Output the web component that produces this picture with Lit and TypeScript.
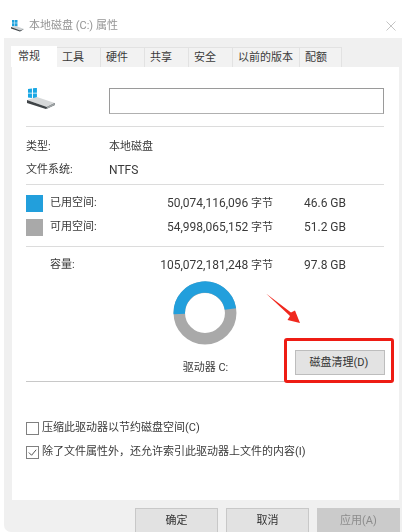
import { LitElement, html, css } from "lit";
import { customElement } from "lit/decorators.js";

@customElement("app-root")
export class AppRoot extends LitElement {
  static styles = css`
    :host {
      display: block; width: 402px; height: 532px; overflow: hidden; position: relative;
      background: #fff; color: #3a3a3a;
      font: 11px/16px Roboto, "Noto Sans CJK SC", sans-serif;
    }
    .soft { filter: blur(0.45px); height: 532px; position: relative; }
    .n { font-size: 12px; }
    .title { height: 38px; display: flex; align-items: center; padding: 14px 6px 0 11px; box-sizing: border-box; color: #959595; }
    .title svg.ic { margin-right: 5px; }
    .title .x { margin-left: auto; }
    .panel { margin-left: 4px; height: 494px; background: #f0f0f0; border-bottom-left-radius: 7px; padding: 8px 4px 0 7px; box-sizing: border-box; }
    .tabs { display: flex; height: 21px; align-items: flex-end; }
    .tab { height: 20px; box-sizing: border-box; border: 1px solid #e2e2e2; border-bottom: 0; border-left: 0; display: flex; align-items: center; padding-left: 5px; background: #f2f2f2; }
    .tab.on { height: 21px; background: #fff; border: 0; width: 46px; padding-left: 7px; }
    .content { width: 387px; height: 433px; background: #fff; padding: 0 15px 0 14px; box-sizing: border-box; margin-left: 1px; overflow: hidden; }
    .head { display: flex; padding-top: 21px; height: 59px; box-sizing: border-box; }
    .head svg { width: 30px; }
    .input { margin-left: 53px; width: 277px; height: 26px; box-sizing: border-box; border: 1px solid #9a9a9a; border-bottom-color: #b0b0b0; }
    .sep { height: 1px; background: #dcdcdc; }
    .kv { display: grid; grid-template-columns: 83px 1fr; grid-auto-rows: 23px; padding-top: 8px; height: 57px; box-sizing: border-box; align-items: center; }
    .stats { display: grid; grid-template-columns: 24px 60px 163px 31px auto; align-items: center; grid-auto-rows: 24px; }
    .stats.top { padding-top: 6px; }
    .stats.cap { padding-top: 6px; }
    .sep.gap { margin-top: 7px; }
    .sep.dark { background: #c8c8c8; }
    .sw { width: 17px; height: 17px; }
    .used { background: #229fdc; }
    .free { background: #a9a9a9; }
    .r { text-align: right; white-space: nowrap; }
    .driveArea { height: 104px; position: relative; display: flex; flex-direction: column; align-items: center; width: 358px; }
    .donut { margin: 4px 0 0 0; width: 64px; height: 64px; display: block; }
    .dl { margin: 15px 0 0 1px; }
    .clean { position: absolute; left: 269px; top: 73px; width: 90px; height: 25px; box-sizing: border-box; background: #e3e3e3; border: 1px solid #bdbdbd; font: inherit; color: #333; padding: 0 2px 0 0; }
    .checks { margin-top: 38px; display: flex; flex-direction: column; gap: 8px; }
    .ck { display: flex; align-items: center; height: 16px; gap: 3px; white-space: nowrap; }
    .box { width: 13px; height: 13px; box-sizing: border-box; border: 1px solid #808080; display: block; background: #fff; flex: none; }
    .btns { display: flex; justify-content: flex-end; gap: 8px; margin-top: 8px; margin-right: -2px; }
    .btn { width: 83px; height: 28px; box-sizing: border-box; border: 1px solid #c8c8c8; background: #e2e2e2; font: inherit; color: #333; padding: 0 0 2px; }
    .btn.off { background: #cbcbcb; color: #8c8c8c; border-color: #cbcbcb; }
    .mark { position: absolute; inset: 0; width: 402px; height: 532px; pointer-events: none; }
  `;

  render() {
    const tabs: [string, number][] = [["工具", 44], ["硬件", 44], ["共享", 44], ["安全", 44], ["以前的版本", 67], ["配额", 42]];
    return html`<div class="soft">
      <div class="title">
        <svg class="ic" width="13" height="12" viewBox="0 0 13 12">
          <path d="M1 0h2.400v2.800H1zM3.900 0h2.600v2.800H3.900zM1 3.300h2.400v2.900H1zM3.900 3.300h2.600v2.900H3.900z" fill="#1da1dc"/>
          <path d="M0 7l5-1 8 3-4 2.500z" fill="#cfd3d5"/><path d="M0 7v1.500l9 3 4-2.500-4 1.500z" fill="#3c4245"/>
        </svg>
        <span>本地磁盘 (C:) 属性</span>
        <svg class="x" width="10" height="10" viewBox="0 0 10 10"><path d="M.5.500l9 9M9.500.500l-9 9" stroke="#c4c4c4" fill="none"/></svg>
      </div>
      <div class="panel">
        <div class="tabs">
          <div class="tab on">常规</div>
          ${tabs.map(([t, w]) => html`<div class="tab" style="width:${w}px">${t}</div>`)}
        </div>
        <div class="content">
          <div class="head">
            <svg width="30" height="22" viewBox="0 0 30 22">
              <path d="M2 1l4-.6v4.400H2zM7 .3l4-.6v5.100H7zM2 5.500h4v4.400l-4-.5zM7 5.500h4v5l-4-.6z" fill="#19a7e4"/>
              <path d="M1 12l10-3 18 6-8 4z" fill="#d6d8d9"/>
              <path d="M1 12v3l19 6 9-4v-2l-8 4z" fill="#3f4447"/>
              <path d="M21 19l8-4v2l-8 4z" fill="#9fa4a6"/>
            </svg>
            <div class="input"></div>
          </div>
          <div class="sep"></div>
          <div class="kv">
            <div>类型:</div><div>本地磁盘</div>
            <div>文件系统:</div><div class="n">NTFS</div>
          </div>
          <div class="sep"></div>
          <div class="stats top">
            <div class="sw used"></div><div>已用空间:</div><div class="r"><span class="n">50,074,116,096</span> 字节</div><div></div><div class="n">46.6 GB</div>
            <div class="sw free"></div><div>可用空间:</div><div class="r"><span class="n">54,998,065,152</span> 字节</div><div></div><div class="n">51.2 GB</div>
          </div>
          <div class="sep gap"></div>
          <div class="stats cap">
            <div></div><div>容量:</div><div class="r"><span class="n">105,072,181,248</span> 字节</div><div></div><div class="n">97.8 GB</div>
          </div>
          <div class="driveArea">
            <svg class="donut" viewBox="-32 -32 64 64">
              <circle r="25.700" fill="none" stroke="#a9a9a9" stroke-width="11.500"/>
              <path d="M-25.700 1A25.700 25.700 0 0 1 25.400 -4" fill="none" stroke="#229fdc" stroke-width="11.500"/>
            </svg>
            <div class="dl">驱动器 C:</div>
            <button class="clean">磁盘清理(D)</button>
          </div>
          <div class="sep dark"></div>
          <div class="checks">
            <label class="ck"><span class="box"></span>压缩此驱动器以节约磁盘空间(C)</label>
            <label class="ck"><svg class="box" viewBox="0 0 12 12"><path d="M2 6l3 3 5-6" fill="none" stroke="#444"/></svg>除了文件属性外，还允许索引此驱动器上文件的内容(I)</label>
          </div>
        </div>
        <div class="btns">
          <button class="btn">确定</button>
          <button class="btn">取消</button>
          <button class="btn off">应用(A)</button>
        </div>
      </div>
      <svg class="mark" viewBox="0 0 402 532">
        <path d="M266 293.500L291 312.500 295 310.500 300 323 287.500 320 290 316z" fill="#f0281e"/>
        <rect x="285.500" y="339.500" width="107" height="42" rx="1.500" fill="none" stroke="#ee1c14" stroke-width="3"/>
      </svg>
    </div>`;
  }
}
